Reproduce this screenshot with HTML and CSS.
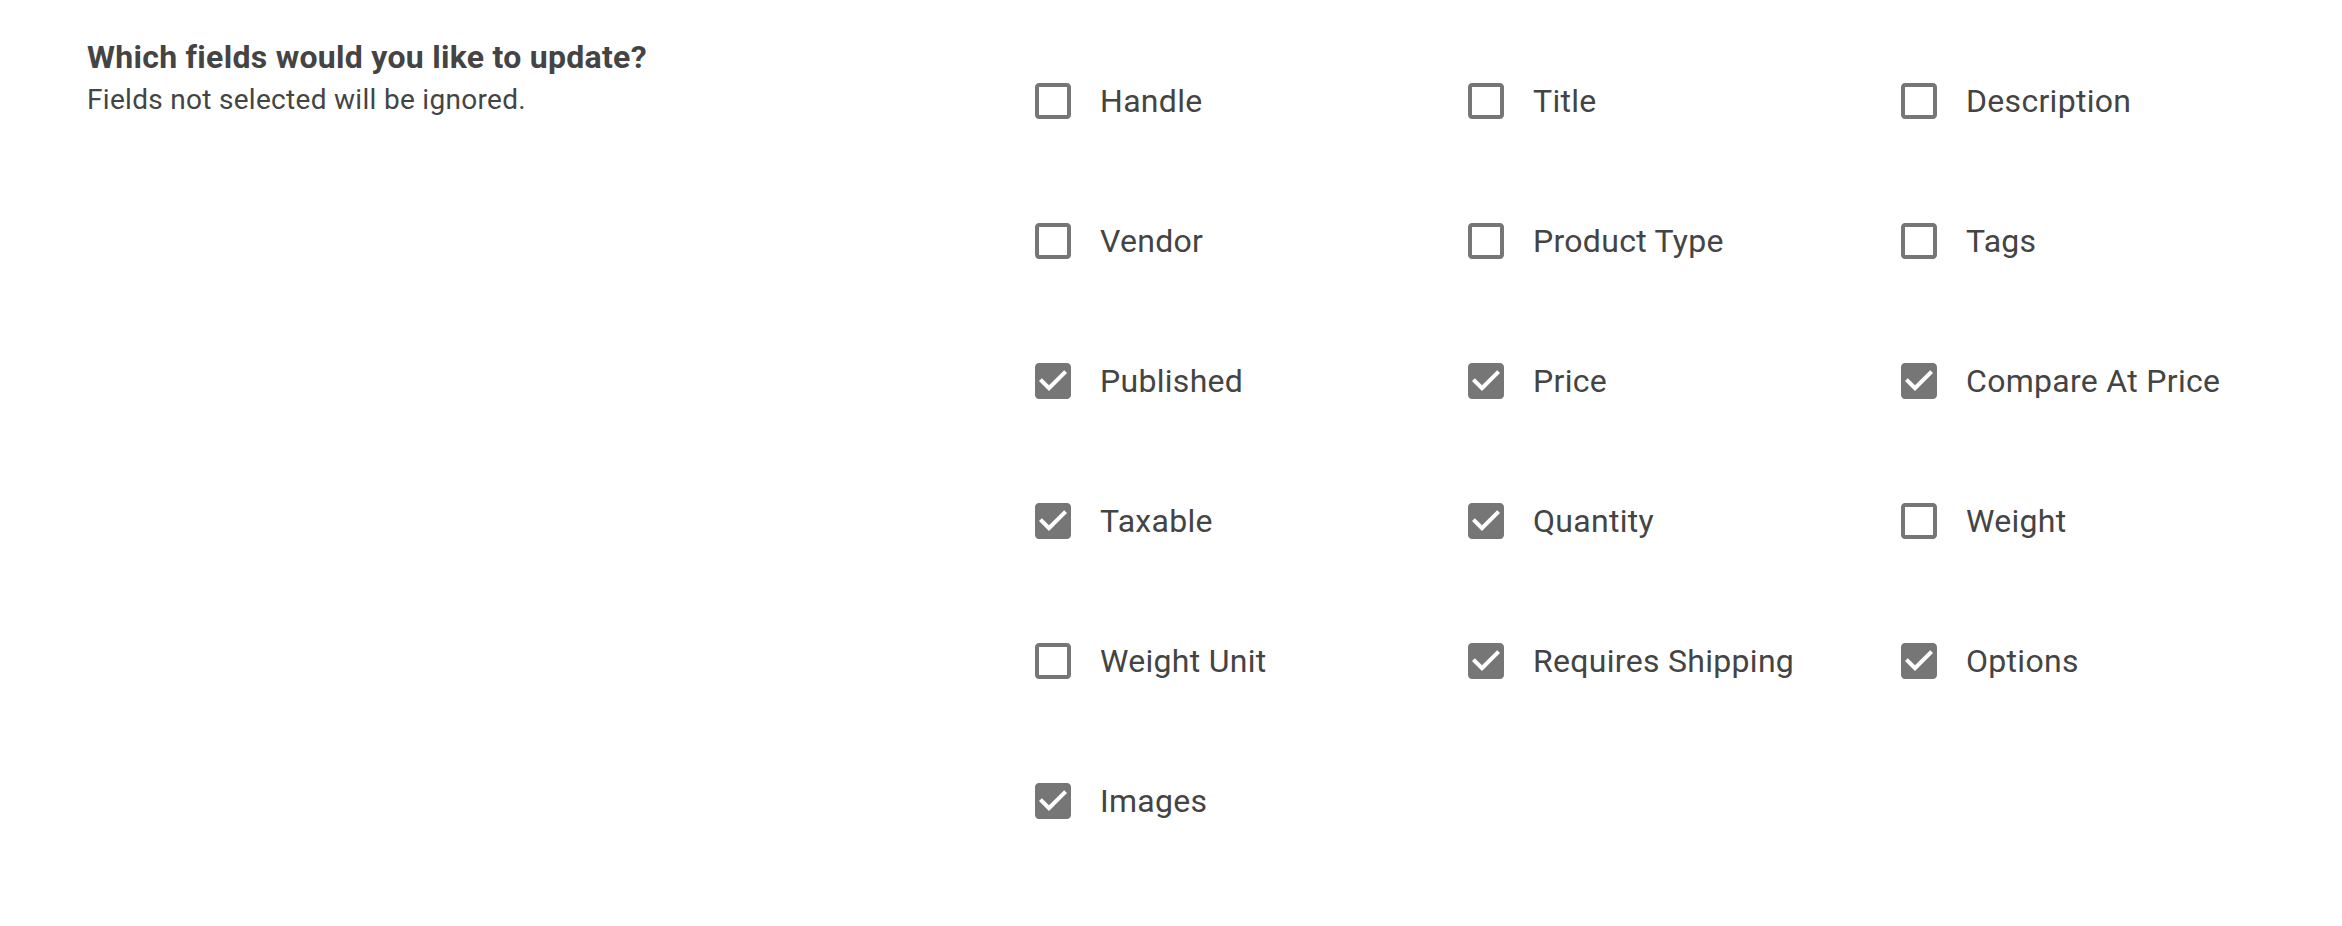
FILE: index.html
```html
<!DOCTYPE html>
<html lang="en">
<head>
  <meta charset="UTF-8">
  <title>Update Fields</title>
  <link rel="stylesheet" href="styles.css">
</head>
<body>

<div class="section">
  <div class="intro">
    <h2>Which fields would you like to update?</h2>
    <p>Fields not selected will be ignored.</p>
  </div>

  <div class="fields">
    <label class="field"><svg viewBox="0 0 24 24"><path d="M19 5v14H5V5h14m0-2H5c-1.1 0-2 .9-2 2v14c0 1.1.9 2 2 2h14c1.1 0 2-.9 2-2V5c0-1.1-.9-2-2-2z"/></svg>Handle</label>
    <label class="field"><svg viewBox="0 0 24 24"><path d="M19 5v14H5V5h14m0-2H5c-1.1 0-2 .9-2 2v14c0 1.1.9 2 2 2h14c1.1 0 2-.9 2-2V5c0-1.1-.9-2-2-2z"/></svg>Title</label>
    <label class="field"><svg viewBox="0 0 24 24"><path d="M19 5v14H5V5h14m0-2H5c-1.1 0-2 .9-2 2v14c0 1.1.9 2 2 2h14c1.1 0 2-.9 2-2V5c0-1.1-.9-2-2-2z"/></svg>Description</label>

    <label class="field"><svg viewBox="0 0 24 24"><path d="M19 5v14H5V5h14m0-2H5c-1.1 0-2 .9-2 2v14c0 1.1.9 2 2 2h14c1.1 0 2-.9 2-2V5c0-1.1-.9-2-2-2z"/></svg>Vendor</label>
    <label class="field"><svg viewBox="0 0 24 24"><path d="M19 5v14H5V5h14m0-2H5c-1.1 0-2 .9-2 2v14c0 1.1.9 2 2 2h14c1.1 0 2-.9 2-2V5c0-1.1-.9-2-2-2z"/></svg>Product Type</label>
    <label class="field"><svg viewBox="0 0 24 24"><path d="M19 5v14H5V5h14m0-2H5c-1.1 0-2 .9-2 2v14c0 1.1.9 2 2 2h14c1.1 0 2-.9 2-2V5c0-1.1-.9-2-2-2z"/></svg>Tags</label>

    <label class="field"><svg viewBox="0 0 24 24"><path d="M19 3H5c-1.11 0-2 .9-2 2v14c0 1.1.89 2 2 2h14c1.11 0 2-.9 2-2V5c0-1.1-.89-2-2-2zm-9 14l-5-5 1.41-1.41L10 14.17l7.59-7.59L19 8l-9 9z"/></svg>Published</label>
    <label class="field"><svg viewBox="0 0 24 24"><path d="M19 3H5c-1.11 0-2 .9-2 2v14c0 1.1.89 2 2 2h14c1.11 0 2-.9 2-2V5c0-1.1-.89-2-2-2zm-9 14l-5-5 1.41-1.41L10 14.17l7.59-7.59L19 8l-9 9z"/></svg>Price</label>
    <label class="field"><svg viewBox="0 0 24 24"><path d="M19 3H5c-1.11 0-2 .9-2 2v14c0 1.1.89 2 2 2h14c1.11 0 2-.9 2-2V5c0-1.1-.89-2-2-2zm-9 14l-5-5 1.41-1.41L10 14.17l7.59-7.59L19 8l-9 9z"/></svg>Compare At Price</label>

    <label class="field"><svg viewBox="0 0 24 24"><path d="M19 3H5c-1.11 0-2 .9-2 2v14c0 1.1.89 2 2 2h14c1.11 0 2-.9 2-2V5c0-1.1-.89-2-2-2zm-9 14l-5-5 1.41-1.41L10 14.17l7.59-7.59L19 8l-9 9z"/></svg>Taxable</label>
    <label class="field"><svg viewBox="0 0 24 24"><path d="M19 3H5c-1.11 0-2 .9-2 2v14c0 1.1.89 2 2 2h14c1.11 0 2-.9 2-2V5c0-1.1-.89-2-2-2zm-9 14l-5-5 1.41-1.41L10 14.17l7.59-7.59L19 8l-9 9z"/></svg>Quantity</label>
    <label class="field"><svg viewBox="0 0 24 24"><path d="M19 5v14H5V5h14m0-2H5c-1.1 0-2 .9-2 2v14c0 1.1.9 2 2 2h14c1.1 0 2-.9 2-2V5c0-1.1-.9-2-2-2z"/></svg>Weight</label>

    <label class="field"><svg viewBox="0 0 24 24"><path d="M19 5v14H5V5h14m0-2H5c-1.1 0-2 .9-2 2v14c0 1.1.9 2 2 2h14c1.1 0 2-.9 2-2V5c0-1.1-.9-2-2-2z"/></svg>Weight Unit</label>
    <label class="field"><svg viewBox="0 0 24 24"><path d="M19 3H5c-1.11 0-2 .9-2 2v14c0 1.1.89 2 2 2h14c1.11 0 2-.9 2-2V5c0-1.1-.89-2-2-2zm-9 14l-5-5 1.41-1.41L10 14.17l7.59-7.59L19 8l-9 9z"/></svg>Requires Shipping</label>
    <label class="field"><svg viewBox="0 0 24 24"><path d="M19 3H5c-1.11 0-2 .9-2 2v14c0 1.1.89 2 2 2h14c1.11 0 2-.9 2-2V5c0-1.1-.89-2-2-2zm-9 14l-5-5 1.41-1.41L10 14.17l7.59-7.59L19 8l-9 9z"/></svg>Options</label>

    <label class="field"><svg viewBox="0 0 24 24"><path d="M19 3H5c-1.11 0-2 .9-2 2v14c0 1.1.89 2 2 2h14c1.11 0 2-.9 2-2V5c0-1.1-.89-2-2-2zm-9 14l-5-5 1.41-1.41L10 14.17l7.59-7.59L19 8l-9 9z"/></svg>Images</label>
  </div>
</div>

</body>
</html>
```

FILE: styles.css
```css
body {
  margin: 0;
  font-family: Roboto, "Liberation Sans", sans-serif;
  color: #444444;
  background: #ffffff;
}

.section {
  display: flex;
  align-items: flex-start;
  padding: 38px 0 0 87px;
}

.intro {
  width: 942px;
  flex: none;
}

.intro h2 {
  margin: 0;
  font-size: 32px;
  line-height: 38px;
  font-weight: 700;
  letter-spacing: 0.28px;
}

.intro p {
  margin: 6px 0 0;
  font-size: 28px;
  line-height: 36px;
  letter-spacing: 0.3px;
}

.fields {
  display: grid;
  grid-template-columns: repeat(3, 433px);
  row-gap: 92px;
  margin-top: 39px;
}

.field {
  display: flex;
  align-items: center;
  gap: 23px;
  height: 48px;
  font-size: 32px;
  letter-spacing: 0.3px;
  cursor: pointer;
}

.field svg {
  width: 48px;
  height: 48px;
  flex: none;
  fill: #767676;
}
```
